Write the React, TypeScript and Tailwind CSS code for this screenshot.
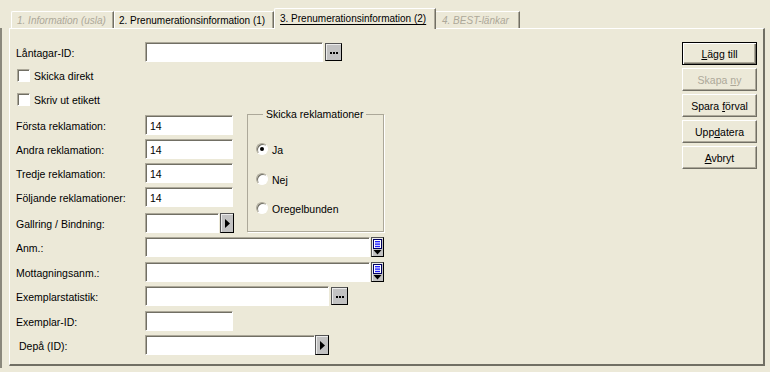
import React from "react";

const sunken =
  "bg-white border border-t-[#ACA899] border-l-[#ACA899] border-r-white border-b-white shadow-[inset_1px_1px_0_#716F64]";

function Input({ cls, value }: { cls: string; value?: string }) {
  return (
    <div className={`${cls} h-[20px] ${sunken} flex items-center pl-[4px] pt-[1px] shrink-0`}>
      {value}
    </div>
  );
}

function Label({ children, cls = "" }: { children: React.ReactNode; cls?: string }) {
  return <div className={`w-[129px] shrink-0 pt-[2px] ${cls}`}>{children}</div>;
}

function DotsBtn() {
  return (
    <div className="w-[17px] h-[18px] ml-[2px] -mt-px shrink-0 border border-[#555] border-r-black border-b-black bg-[#c2c2c2] shadow-[inset_1px_1px_0_#ececec] flex items-center justify-center gap-[1px] pt-[2px]">
      <span className="w-[2px] h-[2px] bg-black" />
      <span className="w-[2px] h-[2px] bg-black" />
      <span className="w-[2px] h-[2px] bg-black" />
    </div>
  );
}

function ArrowBtn({ cls }: { cls: string }) {
  return (
    <div
      className={`${cls} w-[14px] h-[20px] shrink-0 border border-[#555] border-r-black border-b-black bg-[#c2c2c2] shadow-[inset_1px_1px_0_#ececec] flex items-center justify-center`}
    >
      <svg width="5" height="9" viewBox="0 0 5 9">
        <path d="M0 0 L5 4.5 L0 9 Z" fill="#000" />
      </svg>
    </div>
  );
}

function MemoBtn() {
  return (
    <div className="w-[13px] h-[20px] ml-[1px] shrink-0 border border-[#555] border-r-black border-b-black bg-[#c2c2c2] shadow-[inset_1px_1px_0_#ececec] flex items-start justify-center pt-[1px]">
      <svg width="9" height="16" viewBox="0 0 9 16">
        <rect x="0.5" y="0.5" width="8" height="9" fill="#fff" stroke="#000060" />
        <rect x="2" y="2" width="5" height="1.4" fill="#2020ff" />
        <rect x="2" y="4.4" width="5" height="1.4" fill="#2020ff" />
        <rect x="2" y="6.8" width="5" height="1.4" fill="#2020ff" />
        <path d="M0.5 11 L8.5 11 L4.5 15.5 Z" fill="#000" />
      </svg>
    </div>
  );
}

function Checkbox({ label, cls }: { label: string; cls: string }) {
  return (
    <div className={`${cls} h-[16px] flex items-center`}>
      <div className={`w-[13px] h-[13px] ml-[1px] ${sunken}`} />
      <span className="ml-[4px] pt-[1px]">{label}</span>
    </div>
  );
}

function Radio({ label, checked, cls }: { label: string; checked?: boolean; cls: string }) {
  return (
    <div className={`${cls} h-[14px] flex items-center`}>
      <div className="w-[12px] h-[12px] rounded-full bg-white border border-t-[#ACA899] border-l-[#ACA899] border-r-white border-b-white shadow-[inset_1px_1px_0_#716F64] flex items-center justify-center">
        {checked && <div className="w-[4px] h-[4px] rounded-full bg-black" />}
      </div>
      <span className="ml-[4px] pt-[1px]">{label}</span>
    </div>
  );
}

const btn =
  "w-[75px] h-[23px] bg-[#ECE9D8] border border-t-white border-l-white border-r-[#716F64] border-b-[#716F64] shadow-[inset_-1px_-1px_0_#ACA899] flex items-center justify-center pt-[1px]";

export default function App() {
  return (
    <div className="w-[770px] h-[372px] bg-[#ECE9D8] overflow-hidden text-[10.5px] leading-[12px] text-black font-['Liberation_Sans',Arial,sans-serif]">
      {/* Tabs */}
      <div className="flex items-end h-[28px] pl-[11px] text-[10px]">
        <div className="w-[103px] h-[17px] border-t border-l border-white border-r border-r-[#716F64] shadow-[inset_-1px_0_0_#ACA899] rounded-tl-[2px] flex items-center pl-[5px] pt-[1px] italic text-[#ACA899]">
          1. Information (usla)
        </div>
        <div className="w-[160px] h-[17px] border-t border-l border-white border-r border-r-[#716F64] shadow-[inset_-1px_0_0_#ACA899] flex items-center pl-[4px] pt-[1px]">
          2. Prenumerationsinformation (1)
        </div>
        <div className="relative z-10 -mb-px w-[162px] h-[21px] bg-[#ECE9D8] border-t border-l border-white border-r border-r-[#716F64] shadow-[inset_-1px_0_0_#ACA899] rounded-tl-[2px] flex items-center pl-[5px]">
          <span className="underline underline-offset-[2px]">3. Prenumerationsinformation (2)</span>
        </div>
        <div className="w-[84px] h-[17px] border-t border-white border-r border-r-[#716F64] shadow-[inset_-1px_0_0_#ACA899] flex items-center pl-[6px] pt-[1px] italic text-[#ACA899]">
          4. BEST-länkar
        </div>
      </div>

      {/* Outer frame line + panel */}
      <div className="h-[340px] border-l-2 border-[#8a887c] pl-[7px]">
        <div className="w-[756px] h-[338px] border-t border-l border-white border-r-2 border-b-2 border-r-[#716F64] border-b-[#716F64] flex justify-between">
          {/* Form */}
          <div className="pl-[6px] flex flex-col">
            <div className="mt-[13px] h-[20px] flex items-center">
              <Label>Låntagar-ID:</Label>
              <Input cls="w-[178px]" />
              <DotsBtn />
            </div>
            <Checkbox cls="mt-[5px]" label="Skicka direkt" />
            <Checkbox cls="mt-[8px]" label="Skriv ut etikett" />

            <div className="mt-[1px] flex items-start">
              <div className="w-[217px] shrink-0 flex flex-col">
                <div className="mt-[7px] h-[20px] flex items-center">
                  <Label>Första reklamation:</Label>
                  <Input cls="w-[88px]" value="14" />
                </div>
                <div className="mt-[4px] h-[20px] flex items-center">
                  <Label>Andra reklamation:</Label>
                  <Input cls="w-[88px]" value="14" />
                </div>
                <div className="mt-[4px] h-[20px] flex items-center">
                  <Label>Tredje reklamation:</Label>
                  <Input cls="w-[88px]" value="14" />
                </div>
                <div className="mt-[4px] h-[20px] flex items-center">
                  <Label>Följande reklamationer:</Label>
                  <Input cls="w-[88px]" value="14" />
                </div>
                <div className="mt-[6px] h-[20px] flex items-center">
                  <Label>Gallring / Bindning:</Label>
                  <Input cls="w-[74px]" />
                  <ArrowBtn cls="ml-[1px]" />
                </div>
              </div>
              <fieldset className="ml-[14px] w-[137px] h-[124px] border border-[#ACA899] shadow-[1px_1px_0_#fff] flex flex-col">
                <legend className="ml-[15px] px-[3px] leading-[12px]">Skicka reklamationer</legend>
                <div className="pl-[8px] flex flex-col">
                  <Radio cls="mt-[22px]" label="Ja" checked />
                  <Radio cls="mt-[16px]" label="Nej" />
                  <Radio cls="mt-[15px]" label="Oregelbunden" />
                </div>
              </fieldset>
            </div>

            <div className="mt-[4px] h-[20px] flex items-center">
              <Label>Anm.:</Label>
              <Input cls="w-[225px]" />
              <MemoBtn />
            </div>
            <div className="mt-[5px] h-[20px] flex items-center">
              <Label>Mottagningsanm.:</Label>
              <Input cls="w-[225px]" />
              <MemoBtn />
            </div>
            <div className="mt-[4px] h-[20px] flex items-center">
              <Label>Exemplarstatistik:</Label>
              <Input cls="w-[184px]" />
              <DotsBtn />
            </div>
            <div className="mt-[5px] h-[20px] flex items-center">
              <Label>Exemplar-ID:</Label>
              <Input cls="w-[88px]" />
            </div>
            <div className="mt-[4px] h-[20px] flex items-center">
              <Label cls="pl-[3px]">Depå (ID):</Label>
              <Input cls="w-[170px]" />
              <ArrowBtn cls="" />
            </div>
          </div>

          {/* Buttons */}
          <div className="mt-[13px] mr-[6px] flex flex-col gap-[3px]">
            <div className="w-[75px] h-[23px] border border-black bg-[#ECE9D8] shadow-[inset_1px_1px_0_#fff,inset_-1px_-1px_0_#716F64,inset_-2px_-2px_0_#ACA899] flex items-center justify-center pt-[1px]">
              <span><span className="underline">L</span>ägg till</span>
            </div>
            <div className={`${btn} text-[#ACA899]`}>
              <span>Skapa <span className="underline">n</span>y</span>
            </div>
            <div className={btn}>
              <span>Spara <span className="underline">f</span>örval</span>
            </div>
            <div className={btn}>
              <span>Upp<span className="underline">d</span>atera</span>
            </div>
            <div className={btn}>
              <span><span className="underline">A</span>vbryt</span>
            </div>
          </div>
        </div>
      </div>
    </div>
  );
}
